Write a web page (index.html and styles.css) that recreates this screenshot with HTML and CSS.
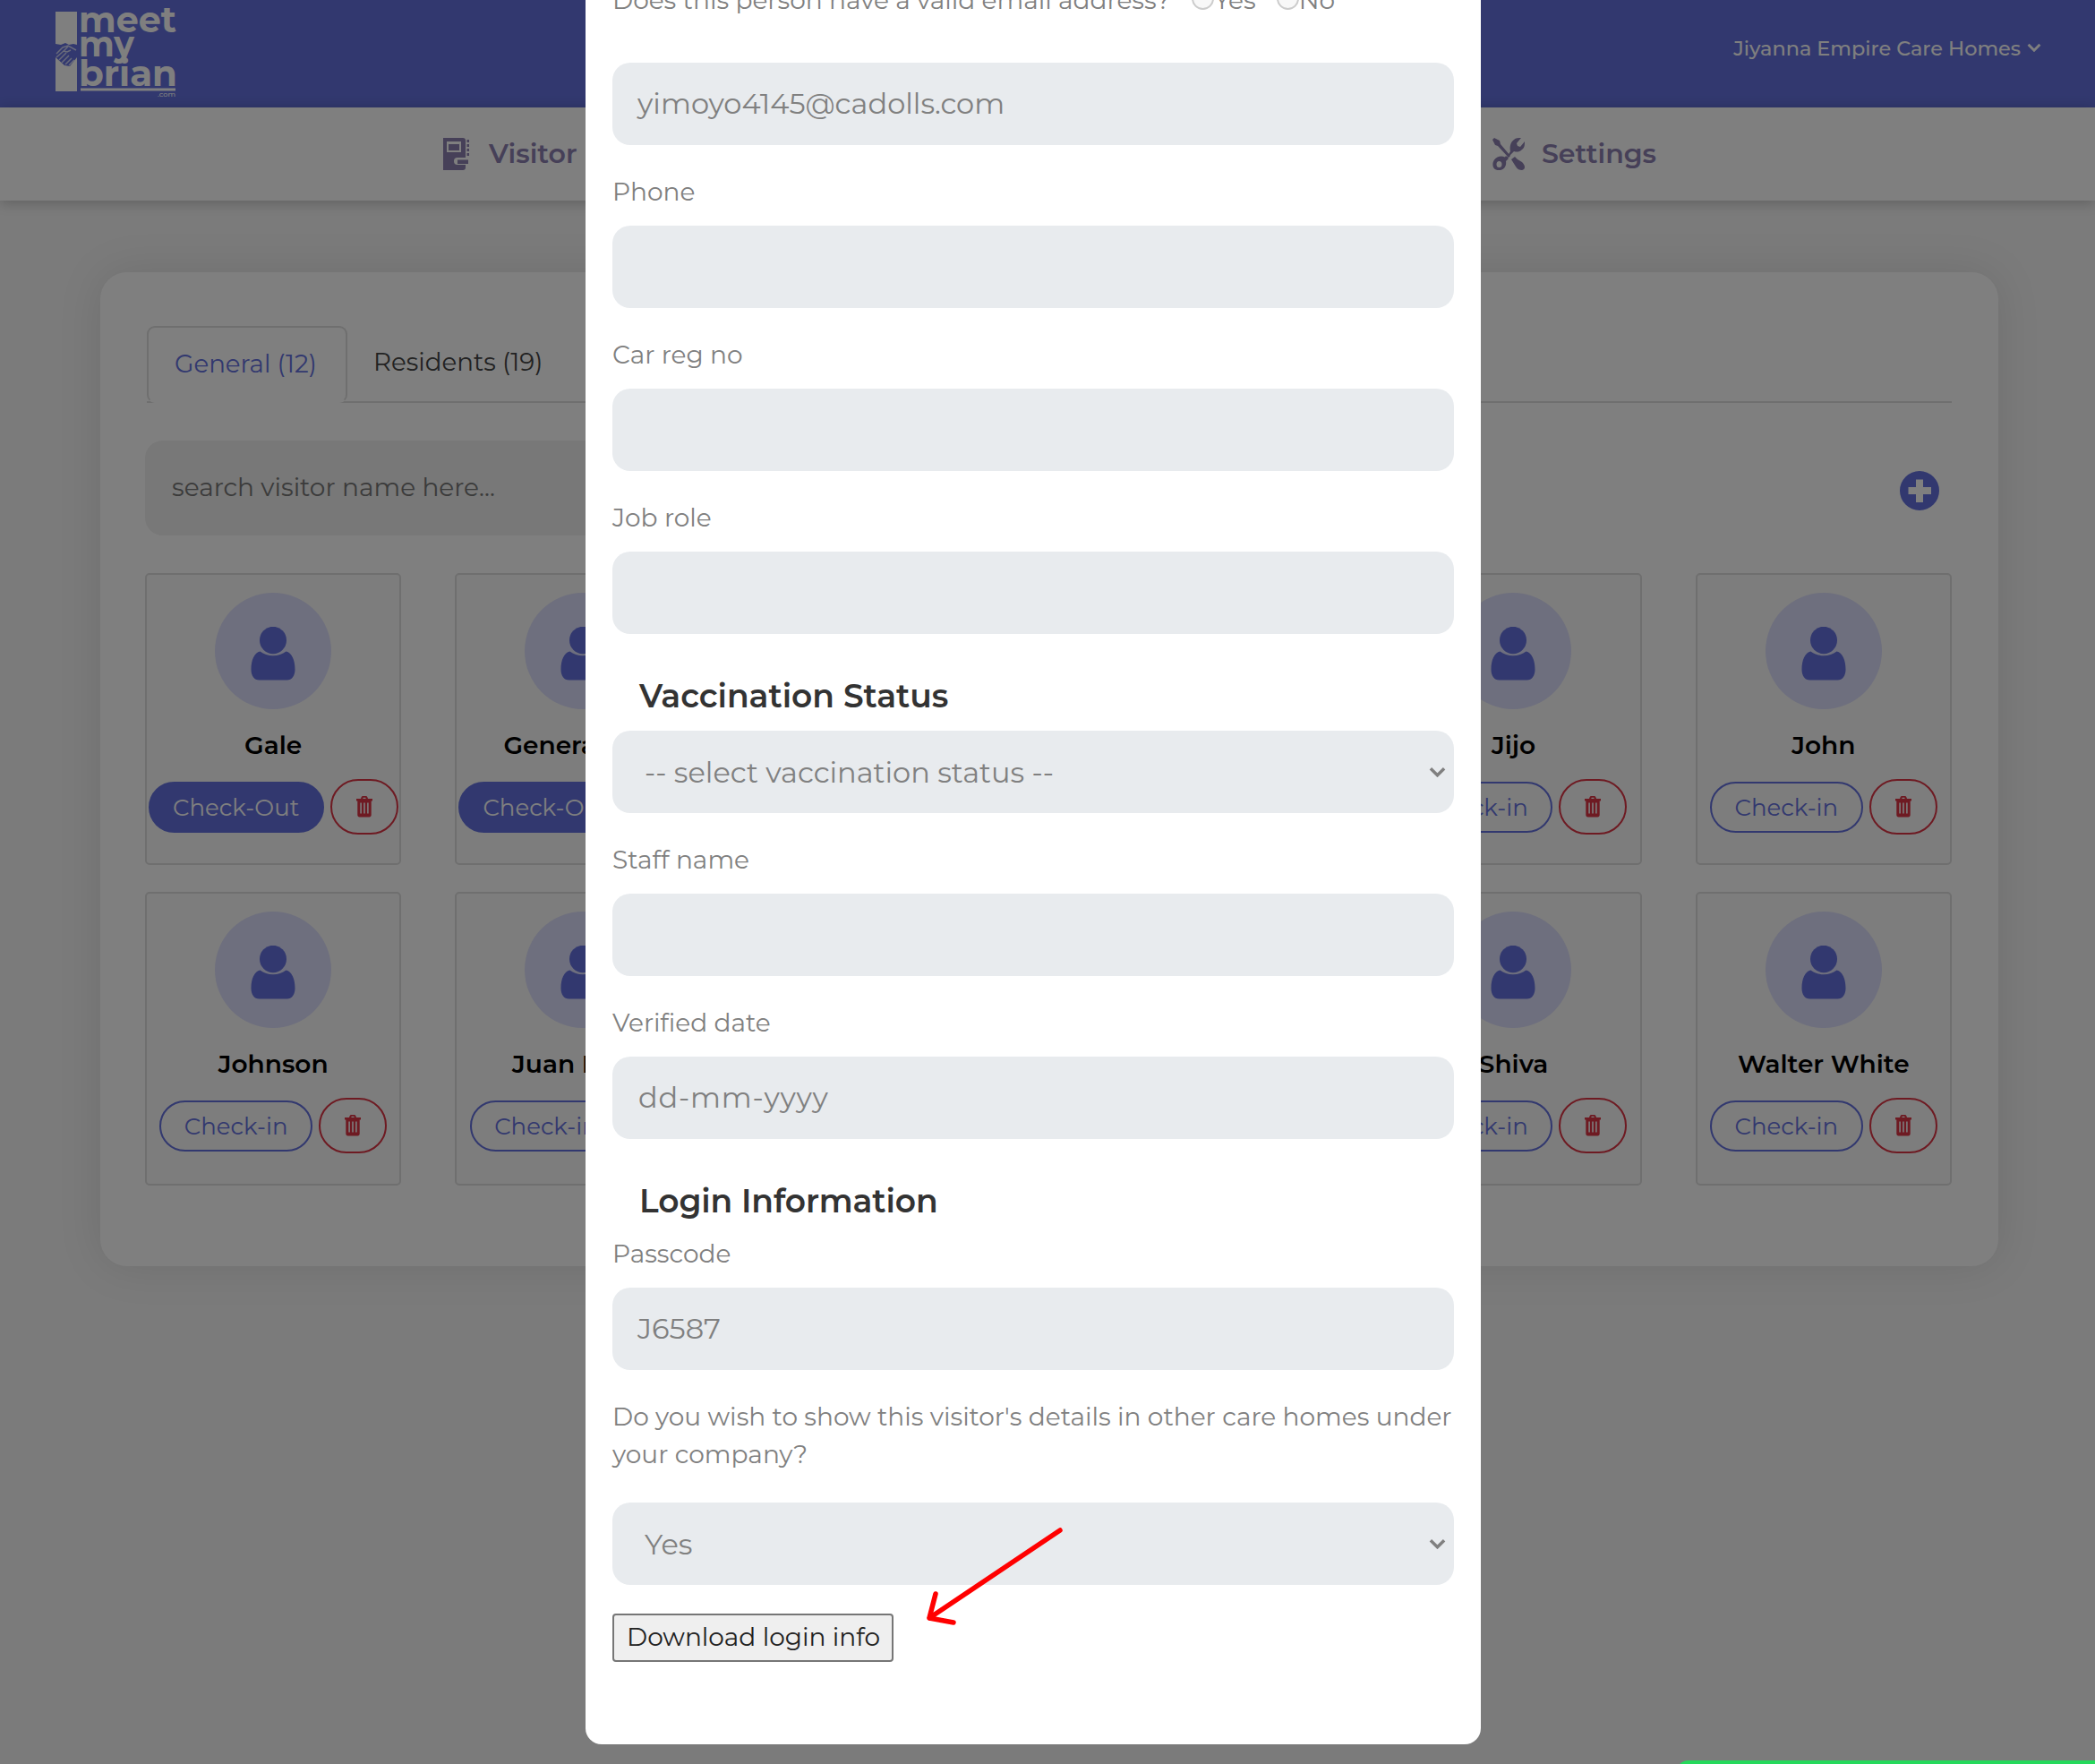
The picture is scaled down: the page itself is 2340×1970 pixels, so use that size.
FILE: index.html
```
<!DOCTYPE html>
<html lang="en">
<head>
<meta charset="utf-8">
<title>Visitors</title>
<link rel="stylesheet" href="styles.css">
</head>
<body>
<svg class="sprite" aria-hidden="true">
  <symbol id="user" viewBox="0 0 50 60">
    <ellipse cx="25" cy="15" rx="15" ry="15.200"/>
    <path d="M10.500 27.500C4 29 .5 37 .5 47.500.5 55 4 59.500 9.500 59.500h31c5.500 0 9-4.500 9-12 0-10.500-3.500-18.500-10-20C35.500 30.500 30.500 32.300 25 32.300s-10.500-1.800-14.500-4.800z"/>
  </symbol>
  <symbol id="trash" viewBox="0 0 20 24">
    <path fill-rule="evenodd" d="M6.500 1.500C6.800.6 7.400 0 8.400 0h3.200c1 0 1.600.6 1.900 1.500L14 3h5v2.600h-1.300V21c0 1.400-.9 2.400-2.200 2.400h-11c-1.300 0-2.200-1-2.200-2.400V5.600H1V3h5zM8.300 3h3.400l-.4-1.200H8.700zM5.300 7.500V19.500h1.600V7.500zm3.900 0V19.500h1.600V7.500zm3.900 0V19.500h1.600V7.500z"/>
  </symbol>
  <symbol id="chevron" viewBox="0 0 20 12">
    <path d="M2 2l8 8 8-8" fill="none" stroke="currentColor" stroke-width="3.600"/>
  </symbol>
</svg>

<header class="topbar">
  <svg class="logo" viewBox="0 0 140 110" role="img" aria-label="meet my brian">
    <path d="M2 13h24v37l-4-1-5 1-4-2-5 2-6-1z"/>
    <path d="M2 64l10 9 6 1 8-10v38H2z"/>
    <g class="hands"><path d="M3 60l7-7 6-2 9 5M3 64l8-7M6 67l8-8M9 70l8-8M13 72l7-7M17 73l6-6M16 52l-5 5 4 1 4-2"/></g>
    <text x="28" y="36" textLength="109" lengthAdjust="spacingAndGlyphs">meet</text>
    <text x="28" y="63" textLength="62" lengthAdjust="spacingAndGlyphs">my</text>
    <text x="28" y="96" textLength="110" lengthAdjust="spacingAndGlyphs">brian</text>
    <path d="M30 98.500h106v3H30z"/>
    <text class="tld" x="116" y="108" textLength="20" lengthAdjust="spacingAndGlyphs">.com</text>
  </svg>
  <div class="account">Jiyanna Empire Care Homes<svg class="account-chevron"><use href="#chevron"/></svg></div>
</header>

<nav class="mainnav">
  <a class="nav-item nav-visitor">
    <svg width="29" height="36" viewBox="0 0 29 36"><path fill-rule="evenodd" d="M0 0h22q3 0 3 3v19h-9q-4 0-4 4t4 4h9v3q0 3-3 3H0zM4 4v12h16V4z"/><path d="M6 7h12v7H6zM16 24.500h12v4.500H16zM26.500 2H29v3h-2.500zM26.500 7H29v3h-2.500zM26.500 12H29v3h-2.500zM26.500 17H29v3h-2.500z"/></svg>
    Visitor
  </a>
  <a class="nav-item nav-settings">
    <svg width="36" height="36" viewBox="0 0 36 36"><path d="M0 2l2-2 6 3 1 4 11 13-2 2L6 9 3 8z"/><path d="M20 15c-1-5 0-10 4-13 2-2 5-2 8-2l-5 6 1 3 3 1 5-6c0 4 0 7-3 9-3 3-6 3-9 2L14 25z"/><path fill-rule="evenodd" d="M14 21.500c-4-2-9-1-12 3C-1 29 0 36 7 36c6 0 9-5 8-10l3-3-3-3zM7.500 26a3 3.500 0 1 1 0 7 3 3.500 0 0 1 0-7z"/><path d="M21 24l4-3 3 3 5 3c4 4 4 8 0 9-3 0-5-1-7-4z"/></svg>
    Settings
  </a>
</nav>

<main class="panel">
  <div class="tabs">
    <div class="tab tab-active">General (12)</div>
    <div class="tab tab-residents">Residents (19)</div>
  </div>
  <div class="toolbar">
    <div class="search">search visitor name here...</div>
    <svg class="add" viewBox="0 0 44 44"><path fill-rule="evenodd" d="M22 0a22 22 0 1 1 0 44 22 22 0 0 1 0-44zM18 9.500V18H9.500v8H18v9h8v-9h9v-8h-9V9.500z"/></svg>
  </div>
  <div class="cards">
    <article class="card">
      <div class="avatar"><svg><use href="#user"/></svg></div>
      <h3 class="name">Gale</h3>
      <div class="actions"><span class="btn btn-out">Check-Out</span><span class="btn-del"><svg><use href="#trash"/></svg></span></div>
    </article>
    <article class="card">
      <div class="avatar"><svg><use href="#user"/></svg></div>
      <h3 class="name">General Test</h3>
      <div class="actions"><span class="btn btn-out">Check-Out</span><span class="btn-del"><svg><use href="#trash"/></svg></span></div>
    </article>
    <article class="card col-5">
      <div class="avatar"><svg><use href="#user"/></svg></div>
      <h3 class="name">Jijo</h3>
      <div class="actions"><span class="btn">Check-in</span><span class="btn-del"><svg><use href="#trash"/></svg></span></div>
    </article>
    <article class="card">
      <div class="avatar"><svg><use href="#user"/></svg></div>
      <h3 class="name">John</h3>
      <div class="actions"><span class="btn">Check-in</span><span class="btn-del"><svg><use href="#trash"/></svg></span></div>
    </article>
    <article class="card">
      <div class="avatar"><svg><use href="#user"/></svg></div>
      <h3 class="name">Johnson</h3>
      <div class="actions"><span class="btn">Check-in</span><span class="btn-del"><svg><use href="#trash"/></svg></span></div>
    </article>
    <article class="card">
      <div class="avatar"><svg><use href="#user"/></svg></div>
      <h3 class="name">Juan Perez</h3>
      <div class="actions"><span class="btn">Check-in</span><span class="btn-del"><svg><use href="#trash"/></svg></span></div>
    </article>
    <article class="card col-5">
      <div class="avatar"><svg><use href="#user"/></svg></div>
      <h3 class="name">Shiva</h3>
      <div class="actions"><span class="btn">Check-in</span><span class="btn-del"><svg><use href="#trash"/></svg></span></div>
    </article>
    <article class="card">
      <div class="avatar"><svg><use href="#user"/></svg></div>
      <h3 class="name">Walter White</h3>
      <div class="actions"><span class="btn">Check-in</span><span class="btn-del"><svg><use href="#trash"/></svg></span></div>
    </article>
  </div>
</main>

<div class="backdrop">
  <section class="modal">
    <div class="email-question">
      <span class="question">Does this person have a valid email address?</span>
      <span class="radio"></span><span class="option">Yes</span>
      <span class="radio"></span><span class="option">No</span>
    </div>
    <div class="field">yimoyo4145@cadolls.com</div>
    <div class="label">Phone</div>
    <div class="field"></div>
    <div class="label">Car reg no</div>
    <div class="field"></div>
    <div class="label">Job role</div>
    <div class="field"></div>
    <h2 class="heading">Vaccination Status</h2>
    <div class="field select">-- select vaccination status --<svg><use href="#chevron"/></svg></div>
    <div class="label">Staff name</div>
    <div class="field"></div>
    <div class="label">Verified date</div>
    <div class="field field-date">dd-mm-yyyy</div>
    <h2 class="heading heading-login">Login Information</h2>
    <div class="label label-passcode">Passcode</div>
    <div class="field">J6587</div>
    <div class="label label-share">Do you wish to show this visitor's details in other care homes under<br>your company?</div>
    <div class="field select">Yes<svg><use href="#chevron"/></svg></div>
    <div class="download">Download login info</div>
  </section>
  <svg class="arrow" viewBox="0 0 160 116"><path d="M154 5L8 103M15 76L8 103l27 5"/></svg>
</div>
<div class="chat-bar"></div>
</body>
</html>
```
FILE: styles.css
```
* { box-sizing: border-box; }
body {
  margin: 0;
  position: relative;
  width: 2340px;
  height: 1970px;
  overflow: hidden;
  background: #f6f6f6;
  font-family: Montserrat, Inter, sans-serif;
  font-size: 28px;
  color: #000;
}
svg { display: block; fill: currentColor; flex: none; }
.sprite { position: absolute; width: 0; height: 0; }

.topbar {
  height: 120px;
  padding: 0 60px;
  display: flex;
  justify-content: space-between;
  background: #6471de;
  color: #fff;
}
.logo { width: 140px; height: 110px; }
.logo text { font-size: 40px; font-weight: 700; }
.logo .tld { font-size: 8px; font-weight: 500; }
.hands path { fill: none; stroke: #fff; stroke-width: 1.500; opacity: .7; }
.account {
  display: flex;
  height: 108px;
  align-items: center;
  font-size: 22.400px;
  font-weight: 500;
}
.account-chevron { width: 16px; height: 10px; margin-left: 7px; margin-bottom: 2px; }

.mainnav {
  position: relative;
  height: 104px;
  padding: 0 490px 0 495px;
  display: flex;
  justify-content: space-between;
  background: #fff;
  box-shadow: 0 2px 14px rgba(0, 0, 0, .24);
}
.nav-item {
  display: flex;
  align-items: center;
  padding-bottom: 1px;
  font-size: 30px;
  font-weight: 600;
  color: #8c80b0;
}
.nav-visitor { gap: 22px; }
.nav-settings { gap: 19px; }

.panel {
  width: 2120px;
  height: 1110px;
  margin: 80px 0 0 112px;
  padding: 60px 52px 0 50px;
  border-radius: 30px;
  background: #fff;
  box-shadow: 0 0 50px rgba(0, 0, 0, .1);
}
.tabs {
  display: flex;
  height: 86px;
  margin-left: 2px;
  border-bottom: 2px solid #dedede;
}
.tab { font-size: 27.700px; line-height: 80px; }
.tab-active {
  width: 224px;
  height: 86px;
  border: 2px solid #dedede;
  border-bottom-color: #fff;
  border-radius: 9px;
  padding-left: 29px;
  color: #6471de;
}
.tab-residents { padding-left: 29px; color: #444; }
.toolbar { display: flex; justify-content: space-between; margin-top: 42px; padding-right: 14px; }
.search {
  width: 1000px;
  height: 106px;
  padding-left: 30px;
  line-height: 104px;
  border-radius: 20px;
  background: #f0f0f0;
  color: #777;
}
.add { width: 44px; height: 44px; margin-top: 34px; color: #6471de; }

.cards {
  display: grid;
  grid-template-columns: repeat(6, 1fr);
  grid-template-rows: 326px 328px;
  gap: 30px 60px;
  margin-top: 42px;
}
.card {
  display: flex;
  flex-direction: column;
  align-items: center;
  padding-top: 20px;
  border: 2px solid #dedede;
  border-radius: 5px;
  background: #fafafa;
}
.col-5 { grid-column: 5; }
.avatar {
  display: grid;
  place-items: center;
  width: 130px;
  height: 130px;
  border-radius: 50%;
  background: #dcdefc;
  color: #6471de;
}
.avatar svg { width: 50px; height: 60px; margin-top: 6px; }
.name { margin: 19px 0 0; font-size: 28px; font-weight: 600; line-height: 42px; }
.actions { display: flex; align-items: center; gap: 7px; margin-top: 17px; }
.btn {
  height: 57px;
  padding: 0 25.500px;
  border: 2px solid #6471de;
  border-radius: 29px;
  font-size: 26px;
  line-height: 54px;
  white-space: nowrap;
  color: #6471de;
}
.btn-out { background: #6471de; color: #fff; }
.btn-del {
  display: grid;
  place-items: center;
  width: 76px;
  height: 62px;
  border: 2px solid #dc3545;
  border-radius: 31px;
  color: #dc3545;
}
.btn-del svg { width: 20px; height: 24px; }

.backdrop {
  position: absolute;
  inset: 0;
  background: rgba(0, 0, 0, .5);
}
.modal {
  width: 1000px;
  height: 1948px;
  margin-left: 654px;
  padding: 0 30px;
  border-radius: 0 0 18px 18px;
  background: #fff;
  color: #808080;
}
.email-question {
  display: flex;
  align-items: center;
  height: 70px;
  padding-bottom: 70px;
  line-height: 42px;
}
.question { flex: none; width: 647px; white-space: nowrap; }
.radio { width: 25px; height: 25px; margin-top: -4px; border: 2px solid #ccc; border-radius: 50%; background: #f8f8f8; }
.option { margin-right: 23px; }
.field {
  display: flex;
  align-items: center;
  height: 92px;
  padding: 0 28px 2px;
  border-radius: 20px;
  background: #e8ebee;
  font-size: 32px;
}
.field-date { padding-left: 29px; letter-spacing: .8px; }
.select { justify-content: space-between; padding: 0 9px 0 36px; }
.select svg { width: 19px; height: 12px; }
.label { margin: 31px 0 17px; line-height: 42px; }
.label-passcode { margin-top: 16px; }
.label-share { margin-bottom: 33px; white-space: nowrap; }
.heading {
  margin: 48px 0 18px 30px;
  font-size: 36px;
  font-weight: 600;
  line-height: 42px;
  color: #333;
}
.heading-login { margin-bottom: 17px; letter-spacing: -.1px; }
.download {
  width: 314px;
  height: 54px;
  margin-top: 32px;
  padding-left: 14px;
  border: 2px solid #767676;
  border-radius: 4px;
  background: #efefef;
  color: #222;
  line-height: 49px;
  white-space: nowrap;
}
.arrow {
  position: absolute;
  left: 1030px;
  top: 1704px;
  width: 160px;
  height: 116px;
}
.arrow path { fill: none; stroke: #f00; stroke-width: 5.500; stroke-linecap: round; stroke-linejoin: round; }
.chat-bar {
  position: absolute;
  left: 1872px;
  top: 1966px;
  width: 480px;
  height: 60px;
  border-radius: 14px 0 0 0;
  background: #25d95b;
}
```
